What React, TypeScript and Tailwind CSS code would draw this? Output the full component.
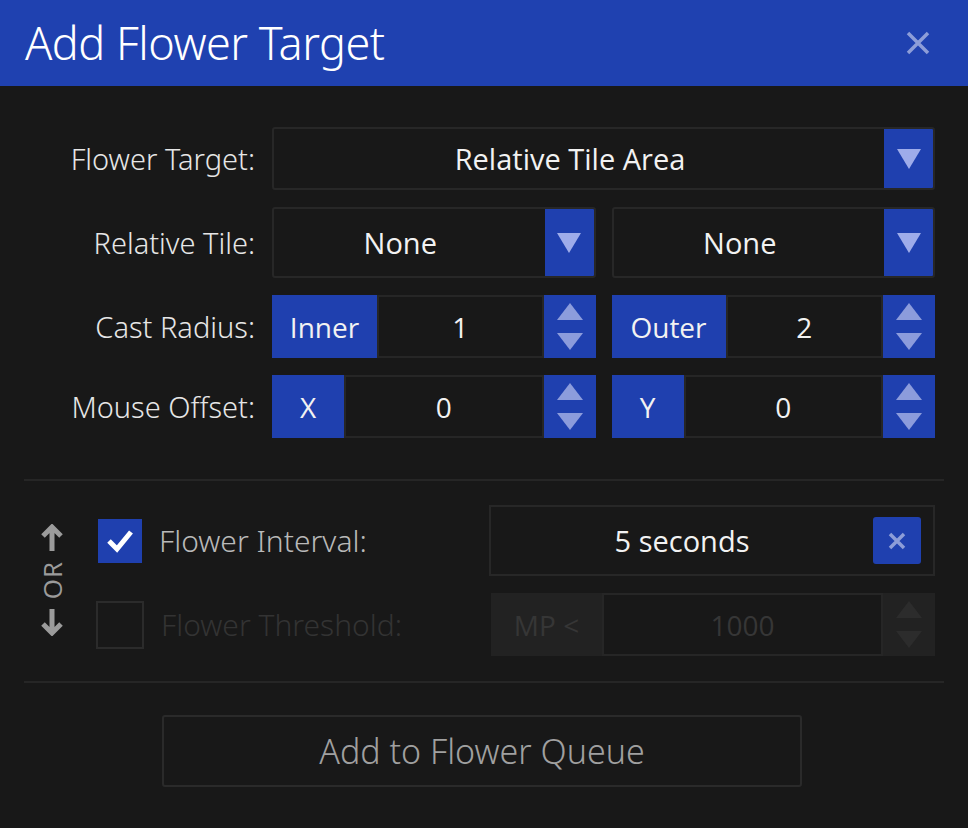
import { ReactNode } from 'react'

const font = { fontFamily: '"Open Sans", "Noto Sans", sans-serif' }
const light = { fontFamily: '"Noto Sans", "Open Sans", sans-serif' }

function DownTri({ className = 'fill-[#9eacea]' }: { className?: string }) {
  return (
    <svg width="24" height="20" viewBox="0 0 24 20" className={className}>
      <polygon points="0,0 24,0 12,20" />
    </svg>
  )
}

function Spinner({ disabled = false }: { disabled?: boolean }) {
  const fill = disabled ? 'fill-[#2c2c2c]' : 'fill-[#8c9cdc]'
  return (
    <div
      className={`flex w-[52px] flex-col items-center justify-center gap-[13px] ${
        disabled ? 'bg-[#222222]' : 'bg-[#1f40af]'
      }`}
    >
      <svg width="26" height="17" viewBox="0 0 26 17" className={fill}>
        <polygon points="13,0 26,17 0,17" />
      </svg>
      <svg width="26" height="17" viewBox="0 0 26 17" className={fill}>
        <polygon points="0,0 26,0 13,17" />
      </svg>
    </div>
  )
}

function Select({ value }: { value: string }) {
  return (
    <div className="flex flex-1 overflow-hidden rounded-[3px] border-2 border-[#272727]">
      <div className="flex flex-1 items-center justify-center pr-[18px] text-[29px] text-[#f2f2f2]">{value}</div>
      <div className="flex w-[49px] items-center justify-center bg-[#1f40af]">
        <DownTri />
      </div>
    </div>
  )
}

function NumberField({ label, labelW, value }: { label: string; labelW: string; value: string }) {
  return (
    <div className="flex flex-1">
      <div className={`flex items-center justify-center bg-[#1f40af] text-[28px] text-[#f2f2f2] ${labelW}`}>
        {label}
      </div>
      <div className="flex flex-1 items-center justify-center border-2 border-[#262626] text-[28px] text-[#f2f2f2]">
        {value}
      </div>
      <Spinner />
    </div>
  )
}

function Row({ label, height, children }: { label: string; height: string; children: ReactNode }) {
  return (
    <div className={`flex items-center gap-[17px] ${height}`}>
      <div className="w-[231px] text-right text-[29px] font-light text-[#e6e6e6]" style={light}>
        {label}
      </div>
      <div className="flex h-full flex-1 gap-[16px]">{children}</div>
    </div>
  )
}

export default function App() {
  return (
    <div className="h-[828px] w-[968px] bg-[#181818]" style={font}>
      {/* title bar */}
      <div className="flex h-[86px] items-center justify-between bg-[#1f41b0] pl-[25px] pr-[38px]">
        <h1 className="text-[45px] font-light tracking-[-0.5px] text-white" style={light}>
          Add Flower Target
        </h1>
        <svg width="24" height="24" viewBox="0 0 24 24" className="stroke-[#8d9dd8]" strokeWidth="3.5">
          <path d="M2 2 L22 22 M22 2 L2 22" />
        </svg>
      </div>

      <div className="px-[24px]">
        {/* target form */}
        <div className="flex flex-col gap-[17px] pr-[9px] pt-[41px]">
          <Row label="Flower Target:" height="h-[63px]">
            <Select value="Relative Tile Area" />
          </Row>
          <Row label="Relative Tile:" height="h-[71px]">
            <Select value="None" />
            <Select value="None" />
          </Row>
          <Row label="Cast Radius:" height="h-[63px]">
            <NumberField label="Inner" labelW="w-[105px]" value="1" />
            <NumberField label="Outer" labelW="w-[114px]" value="2" />
          </Row>
          <Row label="Mouse Offset:" height="h-[63px]">
            <NumberField label="X" labelW="w-[72px]" value="0" />
            <NumberField label="Y" labelW="w-[72px]" value="0" />
          </Row>
        </div>

        <div className="mt-[41px] h-[2px] bg-[#262626]" />

        {/* trigger options */}
        <div className="flex pr-[9px] pt-[24px]">
          <div className="flex w-[72px] flex-col items-center justify-center pb-[2px] pr-[16px] text-[#9b9b9b]">
            <svg width="24" height="27" viewBox="0 0 24 27" className="stroke-[#9b9b9b]" strokeWidth="5" fill="none">
              <path d="M12 27 V4 M3 12 L12 3 L21 12" />
            </svg>
            <div className="my-[8px] flex h-[42px] w-[26px] items-center justify-center">
              <span className="-rotate-90 text-[26px] leading-none tracking-[1px]">OR</span>
            </div>
            <svg width="24" height="27" viewBox="0 0 24 27" className="stroke-[#9b9b9b]" strokeWidth="5" fill="none">
              <path d="M12 0 V23 M3 15 L12 24 L21 15" />
            </svg>
          </div>

          <div className="flex flex-1 flex-col gap-[17px]">
            <div className="flex h-[71px] items-center">
              <div className="ml-[2px] flex h-[44px] w-[44px] items-center justify-center bg-[#1f40af]">
                <svg width="28" height="24" viewBox="0 0 28 24" fill="none" className="stroke-white" strokeWidth="5">
                  <path d="M3 12 L11 20 L25 3" />
                </svg>
              </div>
              <div className="ml-[17px] w-[330px] text-[30px] font-light text-[#b9b9b9]" style={light}>
                Flower Interval:
              </div>
              <div className="flex h-full flex-1 items-center border-2 border-[#272727] pr-[12px]">
                <div className="flex-1 text-center text-[29px] text-[#f2f2f2]">5 seconds</div>
                <div className="flex h-[47px] w-[48px] items-center justify-center rounded-[3px] bg-[#1f40af]">
                  <svg width="18" height="18" viewBox="0 0 18 18" className="stroke-[#8d9dd8]" strokeWidth="3.5">
                    <path d="M2 2 L16 16 M16 2 L2 16" />
                  </svg>
                </div>
              </div>
            </div>

            <div className="flex h-[63px] items-center">
              <div className="h-[48px] w-[48px] border-2 border-[#2b2b2b]" />
              <div className="ml-[17px] w-[330px] text-[30px] font-light text-[#333333]" style={light}>
                Flower Threshold:
              </div>
              <div className="flex h-full flex-1 bg-[#222222]">
                <div className="flex w-[111px] items-center justify-center text-[28px] text-[#363636]">MP &lt;</div>
                <div className="flex flex-1 items-center justify-center border-2 border-[#262626] bg-[#181818] text-[28px] text-[#363636]">
                  1000
                </div>
                <Spinner disabled />
              </div>
            </div>
          </div>
        </div>

        <div className="mt-[25px] h-[2px] bg-[#262626]" />

        <div className="flex justify-center pt-[32px]">
          <button
            className="ml-[-4px] h-[72px] w-[640px] rounded-[3px] border-2 border-[#2a2a2a] text-[34px] font-light text-[#a0a0a0]"
            style={light}
          >
            Add to Flower Queue
          </button>
        </div>
      </div>
    </div>
  )
}
